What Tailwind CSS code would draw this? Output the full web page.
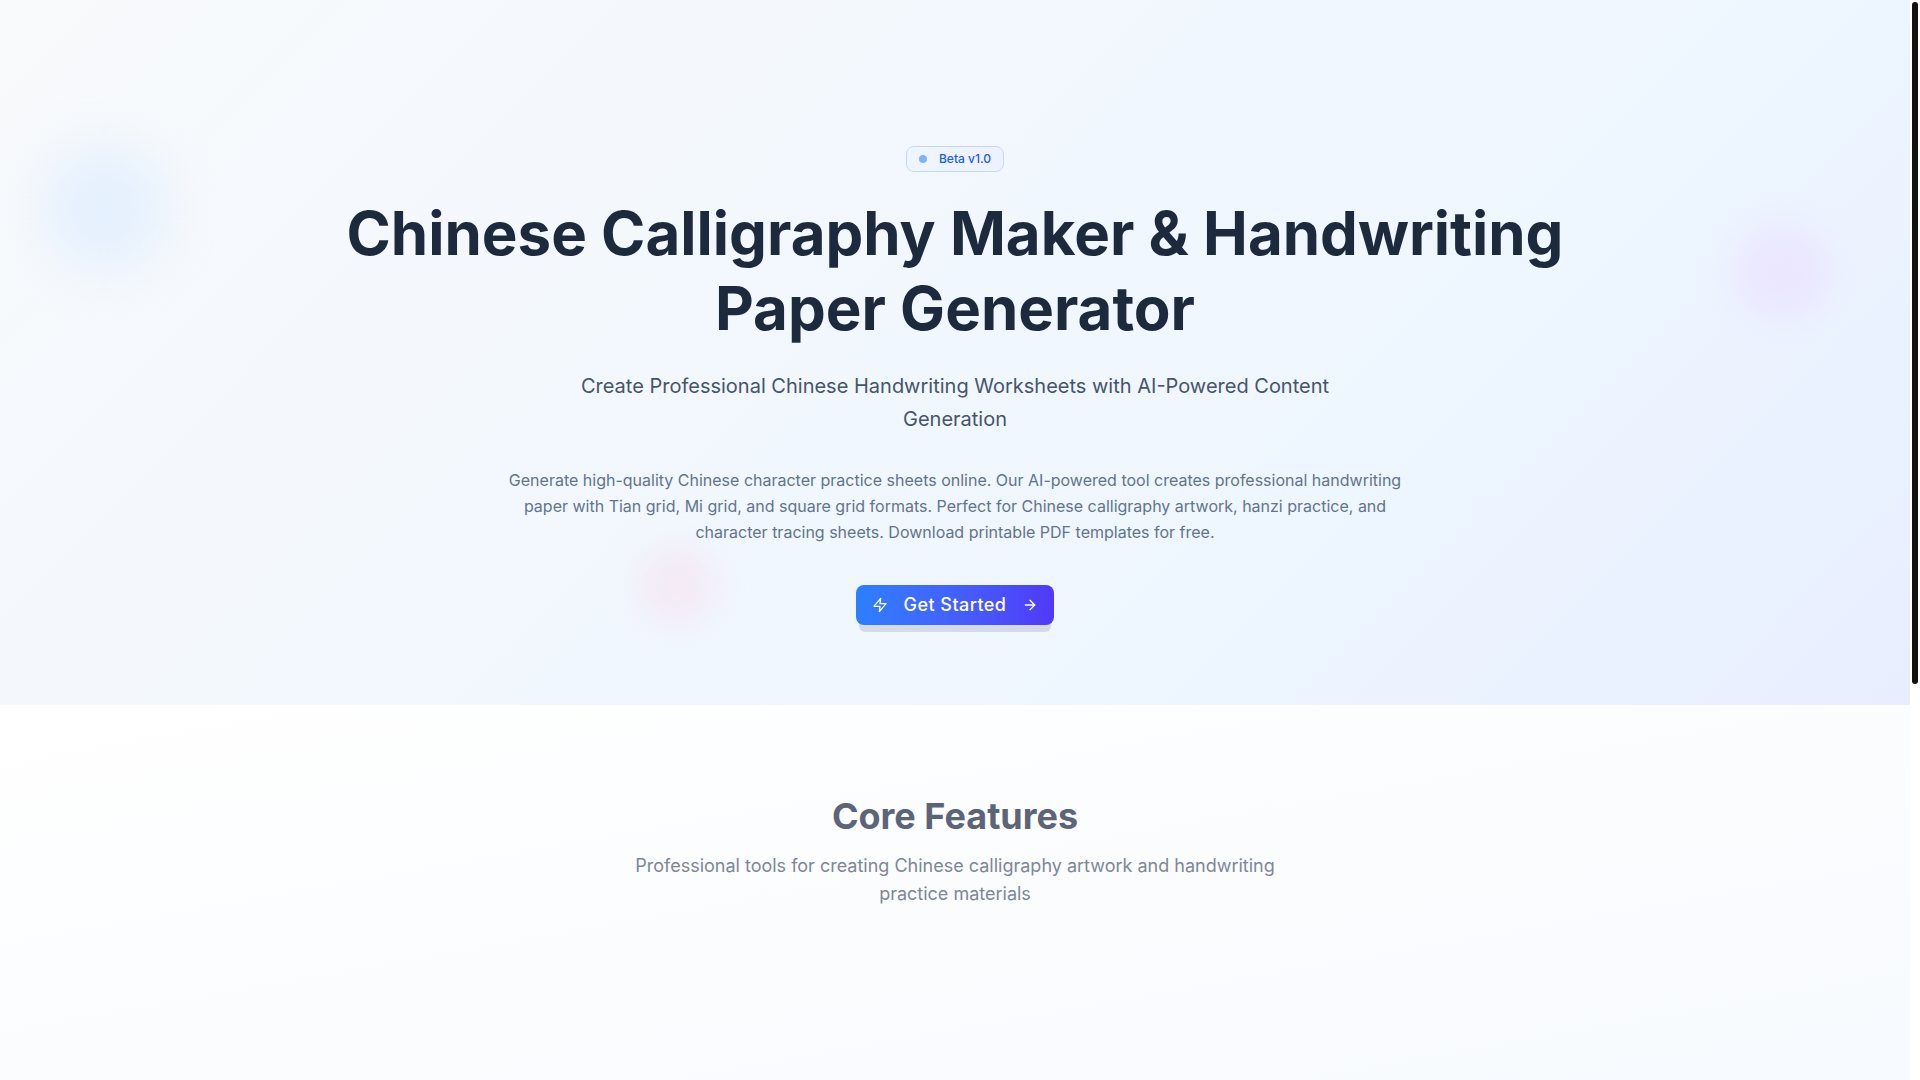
<!DOCTYPE html>
<html lang="en">
  <head>
    <meta charset="UTF-8" />
    <title>Chinese Calligraphy Maker</title>
    <meta content="width=device-width, initial-scale=1" name="viewport" />
    <script src="https://cdn.jsdelivr.net/npm/@tailwindcss/browser@4"></script>
  </head>
  <body class="font-['Inter',sans-serif] bg-white flex h-screen overflow-hidden">
    <div class="flex-1 flex flex-col">
      <section class="relative overflow-hidden bg-linear-135 from-slate-50 via-[#eef6ff] via-70% to-[#e8eeff] pt-[146px] pb-20 px-4 text-center">
        <div aria-hidden="true" class="absolute left-10 top-36 size-32 rounded-full bg-blue-200/30 blur-xl"></div>
        <div aria-hidden="true" class="absolute right-20 top-56 size-24 rounded-full bg-purple-200/40 blur-lg"></div>
        <div aria-hidden="true" class="absolute left-1/3 bottom-20 size-20 rounded-full bg-pink-200/30 blur-lg"></div>
        <div class="relative flex flex-col items-center">
          <div class="inline-flex items-center gap-3 h-[26px] px-3 rounded-lg border border-blue-200 bg-linear-to-r from-blue-50 to-indigo-50 text-blue-600 text-xs font-medium">
            <span class="size-2 rounded-full bg-[#7fb1ff]"></span>
            Beta v1.0
          </div>
          <h1 class="mt-6 max-w-7xl text-6xl leading-[75px] font-bold text-slate-800">Chinese Calligraphy Maker &amp; Handwriting Paper Generator</h1>
          <p class="mt-6 max-w-3xl text-xl leading-[33px] text-slate-600">Create Professional Chinese Handwriting Worksheets with AI-Powered Content Generation</p>
          <p class="mt-[31px] max-w-4xl text-base leading-[26px] text-slate-500">Generate high-quality Chinese character practice sheets online. Our AI-powered tool creates professional handwriting paper with Tian grid, Mi grid, and square grid formats. Perfect for Chinese calligraphy artwork, hanzi practice, and character tracing sheets. Download printable PDF templates for free.</p>
          <div class="relative mt-10">
            <div aria-hidden="true" class="absolute inset-x-[3px] top-3 -bottom-[7px] rounded-md bg-[#d5dbe5]"></div>
            <button type="button" class="relative h-10 px-4 inline-flex items-center gap-4 rounded-lg bg-gradient-to-r from-blue-500 to-indigo-600 text-white text-lg font-medium tracking-wide">
              <svg class="size-4" viewBox="0 0 24 24" fill="none" stroke="currentColor" stroke-width="2" stroke-linecap="round" stroke-linejoin="round"><path d="M13 2 3 14h9l-1 8 10-12h-9l1-8z" /></svg>
              Get Started
              <svg class="size-4" viewBox="0 0 24 24" fill="none" stroke="currentColor" stroke-width="2" stroke-linecap="round" stroke-linejoin="round"><path d="M5 12h14" /><path d="m12 5 7 7-7 7" /></svg>
            </button>
          </div>
        </div>
      </section>
      <section class="flex-1 bg-linear-170 from-white to-[#f7fafe] pt-[91px] px-4 text-center">
        <h2 class="text-4xl font-bold text-[#5c6577]">Core Features</h2>
        <p class="mt-4 mx-auto max-w-2xl text-lg leading-7 text-[#7d8798]">Professional tools for creating Chinese calligraphy artwork and handwriting practice materials</p>
      </section>
    </div>
    <!-- scrollbar -->
    <div aria-hidden="true" class="w-[10px] bg-white pt-[2px] px-[2px]">
      <div class="h-[682px] rounded-full bg-[#111]"></div>
    </div>
  </body>
</html>
